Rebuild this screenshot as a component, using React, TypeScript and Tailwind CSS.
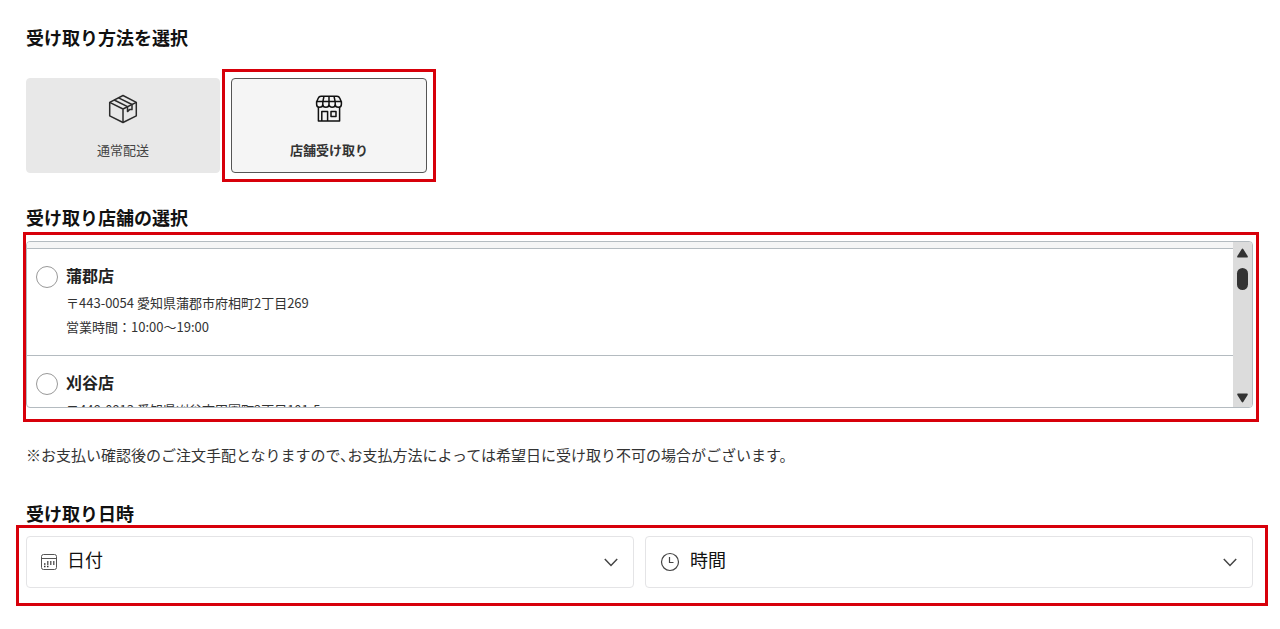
import type { ReactNode } from "react";

const stores = [
  {
    id: "gamagori",
    name: "蒲郡店",
    address: "〒443-0054 愛知県蒲郡市府相町2丁目269",
    hours: "10:00～19:00",
  },
  {
    id: "kariya",
    name: "刈谷店",
    address: "〒448-0813 愛知県刈谷市田園町2丁目101-5",
    hours: "10:00～19:00",
  },
];

function PackageIcon() {
  return (
    <svg width="30" height="30" viewBox="0 0 30 30" fill="none" stroke="#2b2b2b" strokeWidth="1.5" strokeLinejoin="round" aria-hidden="true">
      <path d="M15 1.5 28.3 8.3V21.8L15 28.5 1.7 21.8V8.3Z" />
      <path d="M1.7 8.3 15 15 28.3 8.3M15 15V28.5" />
      <path d="M6.2 6 19.5 12.7V17.6L21.8 15.4 24 15.6V10.5L10.6 3.8" />
    </svg>
  );
}

function StoreIcon() {
  return (
    <svg width="30" height="30" viewBox="0 0 30 30" fill="none" stroke="#111" strokeWidth="1.5" strokeLinejoin="round" aria-hidden="true">
      <path d="M2.6 8 4.2 4.2Q5 2.2 7 2.2H23Q25 2.2 25.8 4.2L27.4 8" />
      <path d="M2.6 7.6H27.4M10 2.2 8.8 8M15 2.2V8M20 2.2 21.2 8" />
      <path d="M2.6 7.6V10.2a3.1 3.1 0 0 0 6.2 0V7.6M8.8 10.2a3.1 3.1 0 0 0 6.2 0V7.6M15 10.2a3.1 3.1 0 0 0 6.2 0V7.6M21.2 10.2a3.1 3.1 0 0 0 6.2 0V7.6" />
      <path d="M4.4 13V27H25.6V13M7.8 27V17.4H13.6V27M17 17.4H22V22.4H17Z" />
    </svg>
  );
}

function CalendarIcon() {
  return (
    <svg width="16" height="16" viewBox="0 0 16 16" fill="none" stroke="#555" aria-hidden="true">
      <rect x="0.5" y="0.5" width="15" height="15" rx="2" />
      <path d="M0.5 4.5H15.5" />
      <path d="M6 8H7.5M9 8H10.5M12 8H13.5M3 10H4.5M6 10H7.5M9 10H10.5M12 10H13.5M3 12.5H4.5M6 12.5H7.5" stroke="#333" strokeWidth="1.4" />
    </svg>
  );
}

function ClockIcon() {
  return (
    <svg width="20" height="20" viewBox="0 0 20 20" fill="none" stroke="#444" strokeWidth="1.2" aria-hidden="true">
      <circle cx="10" cy="10" r="8.5" />
      <path d="M9.5 5V10.5H13.5" />
    </svg>
  );
}

function Picker({ id, label, icon }: { id: string; label: string; icon: ReactNode }) {
  return (
    <div className="flex h-[52px] flex-1 items-center gap-[10px] rounded border border-[#e4e4e6] pr-[15px] pl-[14px]">
      <label htmlFor={id} aria-label={label}>{icon}</label>
      <select id={id} className="h-full min-w-0 flex-1 appearance-none bg-transparent pb-[6px] text-lg text-[#111] outline-none">
        <option>{label}</option>
      </select>
      <svg width="14" height="9" viewBox="0 0 14 9" fill="none" stroke="#444" strokeWidth="1.5" aria-hidden="true">
        <path d="M0.8 1 7 7.5 13.2 1" />
      </svg>
    </div>
  );
}

export default function App() {
  return (
    <main className="bg-white pt-[26px] pr-3 pl-4 font-['Noto_Sans_CJK_JP',sans-serif] text-[#333]">
      {/* 受け取り方法 */}
      <h2 className="pl-[10px] text-lg leading-[22px] font-bold text-[#111]">受け取り方法を選択</h2>
      <div className="mt-[21px] flex items-center gap-[2px] pl-[10px]">
        <button type="button" className="flex h-[95px] w-[194px] flex-col items-center gap-4 rounded border border-[#e8e8e8] bg-[#e8e8e8] pt-[15px] text-[13px] leading-5 text-[#444]">
          <PackageIcon />
          通常配送
        </button>
        <div className="border-3 border-[#d7000a] p-[6px]">
          <button type="button" aria-pressed="true" className="flex h-[95px] w-[196px] flex-col items-center gap-4 rounded border border-[#555] bg-[#f5f5f5] pt-[15px] text-[13px] leading-5 font-bold text-[#333]">
            <StoreIcon />
            店舗受け取り
          </button>
        </div>
      </div>

      {/* 店舗の選択 */}
      <h2 className="mt-6 pl-[10px] text-lg leading-[22px] font-bold text-[#111]">受け取り店舗の選択</h2>
      <div className="mt-1 mr-[9px] ml-[7px] border-3 border-[#d7000a] pt-[6px] pr-[3px] pb-[11px]">
        <div className="flex h-[167px] overflow-hidden rounded border border-[#b4bbc0]">
          <div className="min-w-0 flex-1">
            <div className="h-[7px] border-b border-[#b4bbc0] bg-[#f5f5f5]" />
            {stores.map((store) => (
              <div key={store.id} className="flex gap-2 border-b border-[#b4bbc0] pt-[15px] pb-4 pl-[9px]">
                <input
                  id={store.id}
                  type="radio"
                  name="store"
                  className="mt-0.5 size-[22px] shrink-0 appearance-none rounded-full border border-[#999] bg-white checked:border-[7px]"
                />
                <div>
                  <label htmlFor={store.id} className="block text-base leading-[22px] font-bold text-[#222]">{store.name}</label>
                  <p className="mt-[5px] text-[13px] leading-6">{store.address}</p>
                  <p className="text-[13px] leading-6">営業時間：{store.hours}</p>
                </div>
              </div>
            ))}
          </div>
          {/* スクロールバー */}
          <div className="flex w-[19px] flex-col items-center bg-[#dcdcdc] pt-[6px] pb-1" aria-hidden="true">
            <svg width="11" height="10" viewBox="0 0 11 10" fill="#333">
              <path d="M5.5 0.5Q6 0.5 6.4 1.2L10.8 8.3Q11 9.5 10 9.5H1Q0 9.5 0.2 8.3L4.6 1.2Q5 0.5 5.5 0.5Z" />
            </svg>
            <div className="mt-[10px] h-[22px] w-[11px] rounded-full bg-[#333]" />
            <svg className="mt-auto" width="11" height="10" viewBox="0 0 11 10" fill="#333">
              <path d="M5.5 9.5Q6 9.5 6.4 8.8L10.8 1.7Q11 0.5 10 0.5H1Q0 0.5 0.2 1.7L4.6 8.8Q5 9.5 5.5 9.5Z" />
            </svg>
          </div>
        </div>
      </div>
      <p className="mt-[21px] pl-[10px] text-[15px] leading-6 [font-feature-settings:'halt']">
        ※お支払い確認後のご注文手配となりますので、お支払方法によっては希望日に受け取り不可の場合がございます。
      </p>

      {/* 受け取り日時 */}
      <h2 className="mt-[35px] pl-[10px] text-lg leading-[22px] font-bold text-[#111]">受け取り日時</h2>
      <div className="mt-px flex gap-[11px] border-3 border-[#d7000a] pt-2 pr-3 pb-[15px] pl-[7px]">
        <Picker id="date" label="日付" icon={<CalendarIcon />} />
        <Picker id="time" label="時間" icon={<ClockIcon />} />
      </div>
    </main>
  );
}
